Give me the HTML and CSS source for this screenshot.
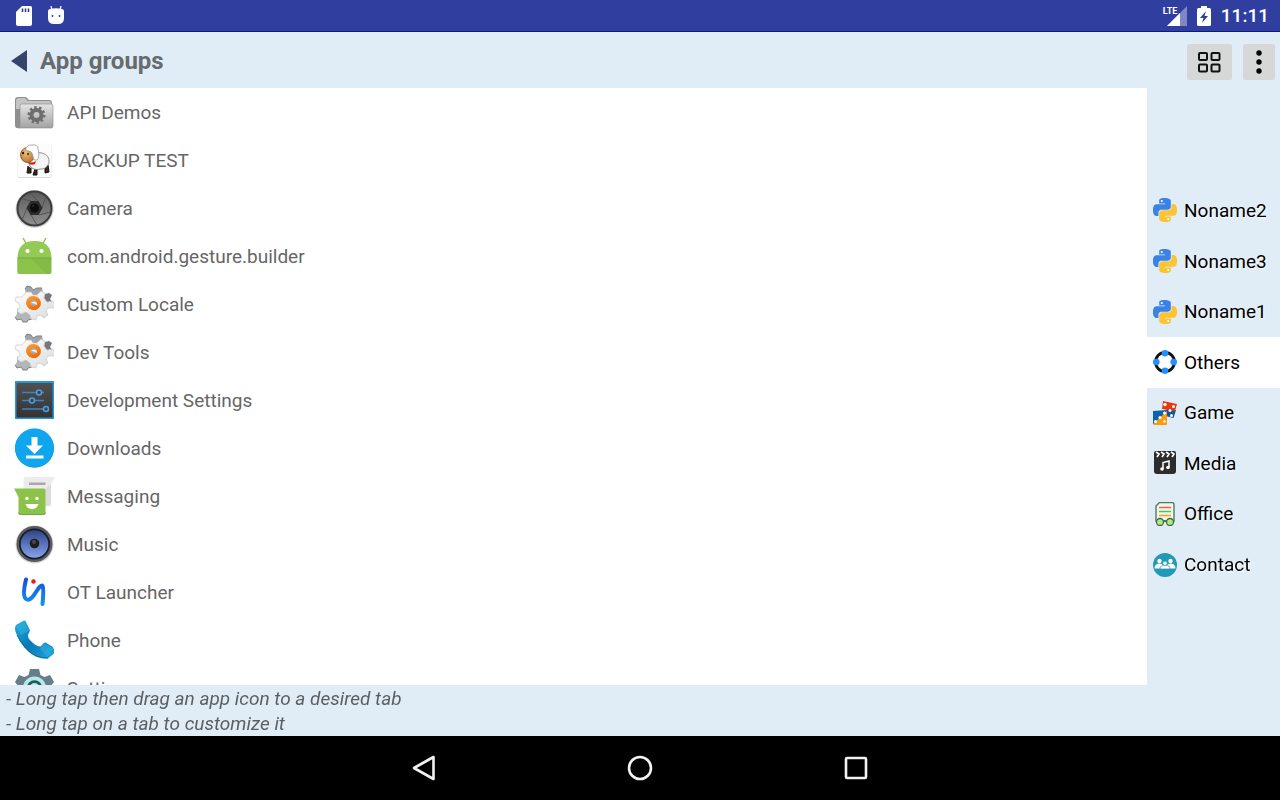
FILE: index.html
```html
<!DOCTYPE html>
<html lang="en">

<head>
    <meta charset="UTF-8">
    <meta name="viewport" content="width=device-width, initial-scale=1.0">
    <title>App groups</title>
    <link rel="stylesheet" href="styles.css">
</head>

<body>
    <!-- Shared shapes -->
    <svg class="defs" aria-hidden="true">
        <defs>
            <linearGradient id="silver" x1="0" y1="0" x2="0" y2="1">
                <stop offset="0" stop-color="#e4e4e4" />
                <stop offset="1" stop-color="#a2a2a2" />
            </linearGradient>
            <linearGradient id="gear-white" x1="0" y1="0" x2="1" y2="1">
                <stop offset="0" stop-color="#ffffff" />
                <stop offset="1" stop-color="#d8dadc" />
            </linearGradient>
            <linearGradient id="orange" x1="0" y1="0" x2="1" y2="1">
                <stop offset="0" stop-color="#ff9a2c" />
                <stop offset="1" stop-color="#f06400" />
            </linearGradient>
            <radialGradient id="tan" cx=".4" cy=".35" r=".7">
                <stop offset="0" stop-color="#f0bc78" />
                <stop offset="1" stop-color="#b8732c" />
            </radialGradient>
            <linearGradient id="lens" x1="0" y1="0" x2="0" y2="1">
                <stop offset="0" stop-color="#5c5c5c" />
                <stop offset="1" stop-color="#8e8e8e" />
            </linearGradient>
            <linearGradient id="speaker" x1="0" y1="0" x2="0" y2="1">
                <stop offset="0" stop-color="#2f4486" />
                <stop offset="1" stop-color="#86a3ec" />
            </linearGradient>
            <linearGradient id="handset" x1="0" y1="0" x2="1" y2="1">
                <stop offset="0" stop-color="#22aee0" />
                <stop offset=".5" stop-color="#0878b4" />
                <stop offset="1" stop-color="#22a8dc" />
            </linearGradient>
            <linearGradient id="ink" x1="0" y1="0" x2="0" y2="1">
                <stop offset="0" stop-color="#1a50e0" />
                <stop offset="1" stop-color="#1292f0" />
            </linearGradient>
            <linearGradient id="panel" x1="0" y1="0" x2="0" y2="1">
                <stop offset="0" stop-color="#505050" />
                <stop offset="1" stop-color="#333333" />
            </linearGradient>
        </defs>

        <symbol id="icon-gears" viewBox="0 0 40 40">
            <path d="M11 5l2-3 4 1 2 3 4-2 5 0 1 4 2 2-3 6H13l-1-6z" fill="#a2a4a7" />
            <path d="M11 5l2-3 4 1 2 3 4-2 5 0" fill="none" stroke="#7d8083" />
            <path d="M30 14l1-4 4-1 3 2-2 4 3 4-4 3-5-4z" fill="#73767a" />
            <path d="M3 25l4-1 8 1 5 5-2 2 0 3-4 1-1 2-4 0-2-3-4 1-2-3 2-3z" fill="#b4b7ba" />
            <path d="M1 33l2 3 4-1 2 3h4l1-2 4-1" fill="none" stroke="#7d8083" />
            <path d="M12 8l5 0 2 3 4 0 4-4 4 2-1 5 3 4 6-1 3 4-2 3-6 0-2 3 2 4-4 3-4-3-3 1-1 4-5-1-1-4-4-3-5 2-4-3 3-4-1-4-4-2 1-4 6 0 2-2z" fill="url(#gear-white)" stroke="#c6c8cb" stroke-width=".7" />
            <ellipse cx="19.500" cy="19" rx="5.500" ry="5" fill="#a5a8ab" stroke="url(#orange)" stroke-width="4" transform="rotate(15 19.500 19)" />
            <path d="M17 19q3-3 6 0v2q-3-2-6-2z" fill="#f4f4f4" />
        </symbol>

        <symbol id="icon-python" viewBox="0 0 24 24">
            <path fill="#3b82e8" d="M14.25.18l.9.2.73.26.59.3.45.32.34.34.25.34.16.33.1.3.04.26.02.2-.01.13V8.5l-.05.63-.13.55-.21.46-.26.38-.3.31-.33.25-.35.19-.35.14-.33.1-.3.07-.26.04-.21.02H8.77l-.69.05-.59.14-.5.22-.41.27-.33.32-.27.35-.2.36-.15.37-.1.35-.07.32-.04.27-.02.21v3.06H3.17l-.21-.03-.28-.07-.32-.12-.35-.18-.36-.26-.36-.36-.35-.46-.32-.59-.28-.73-.21-.88-.14-1.05-.05-1.23.06-1.22.16-1.04.24-.87.32-.71.36-.57.4-.44.42-.33.42-.24.4-.16.36-.1.32-.05.24-.01h.16l.06.01h8.16v-.83H6.18l-.01-2.75-.02-.37.05-.34.11-.31.17-.28.25-.26.31-.23.38-.2.44-.18.51-.15.58-.12.64-.1.71-.06.77-.04.84-.02 1.27.05z" />
            <path fill="#fbc433" transform="rotate(180 12 12)" d="M14.25.18l.9.2.73.26.59.3.45.32.34.34.25.34.16.33.1.3.04.26.02.2-.01.13V8.5l-.05.63-.13.55-.21.46-.26.38-.3.31-.33.25-.35.19-.35.14-.33.1-.3.07-.26.04-.21.02H8.77l-.69.05-.59.14-.5.22-.41.27-.33.32-.27.35-.2.36-.15.37-.1.35-.07.32-.04.27-.02.21v3.06H3.17l-.21-.03-.28-.07-.32-.12-.35-.18-.36-.26-.36-.36-.35-.46-.32-.59-.28-.73-.21-.88-.14-1.05-.05-1.23.06-1.22.16-1.04.24-.87.32-.71.36-.57.4-.44.42-.33.42-.24.4-.16.36-.1.32-.05.24-.01h.16l.06.01h8.16v-.83H6.18l-.01-2.75-.02-.37.05-.34.11-.31.17-.28.25-.26.31-.23.38-.2.44-.18.51-.15.58-.12.64-.1.71-.06.77-.04.84-.02 1.27.05z" />
            <circle cx="8.8" cy="3" r="1.1" fill="#fff" />
            <circle cx="15.2" cy="21" r="1.1" fill="#fff" />
        </symbol>
    </svg>

    <div class="status-bar">
        <div class="status-left">
            <svg width="16" height="20" viewBox="0 0 16 20">
                <path d="M6 0h8.500q1.500 0 1.500 1.500V18q0 2-2 2H2q-2 0-2-2V6z" fill="#fff" />
                <path d="M6.500 2.500v3.500M9.500 2.500v3.500M12.500 2.500v3.500" stroke="#303f9f" stroke-width="1.600" />
            </svg>
            <svg width="16" height="20" viewBox="0 0 16 20">
                <path d="M4 4L3 0M12 4l1-4" stroke="#fff" stroke-width="1.200" />
                <path d="M0 5q0-1.500 2-2 6-1.500 12 0 2 .5 2 2v7q0 6-6 6H6q-6 0-6-6z" fill="#fff" />
                <circle cx="4.500" cy="10" r="1" fill="#303f9f" />
                <circle cx="11.500" cy="10" r="1" fill="#303f9f" />
            </svg>
        </div>
        <div class="status-right">
            <div class="signal">
                <svg width="20" height="20" viewBox="0 0 20 20">
                    <path d="M20 0v20H0z" fill="#7f88c4" />
                    <path d="M13 7v13H0z" fill="#fff" />
                </svg>
                <span class="lte">LTE</span>
            </div>
            <svg width="14" height="20" viewBox="0 0 14 20">
                <path d="M4 0h6v2h2.500q1.500 0 1.500 1.500v15q0 1.500-1.500 1.500h-11Q0 20 0 18.500v-15Q0 2 1.500 2H4z" fill="#fff" />
                <path d="M9 5L3 12h3.500L5 17l6-7H7.500z" fill="#303f9f" />
            </svg>
            <span class="clock">11:11</span>
        </div>
    </div>

    <header class="header">
        <button class="back" aria-label="Back">
            <svg width="16" height="22" viewBox="0 0 16 22">
                <path d="M16 0v22L0 11z" fill="#36446c" />
            </svg>
        </button>
        <h1>App groups</h1>
        <div class="actions">
            <button class="action action-grid" aria-label="Grid view">
                <svg width="25" height="22" viewBox="0 0 25 22" fill="none" stroke="#111" stroke-width="2">
                    <rect x="2" y="2" width="8" height="7" rx="1" />
                    <rect x="14.500" y="2" width="8" height="7" rx="1" />
                    <rect x="2" y="13.500" width="8" height="7" rx="1" />
                    <rect x="14.500" y="13.500" width="8" height="7" rx="1" />
                </svg>
            </button>
            <button class="action action-more" aria-label="More options">
                <svg width="6" height="24" viewBox="0 0 6 24">
                    <circle cx="3" cy="3" r="2.700" />
                    <circle cx="3" cy="12" r="2.700" />
                    <circle cx="3" cy="21" r="2.700" />
                </svg>
            </button>
        </div>
    </header>

    <main class="content">
        <ul class="apps">
            <li>
                <button class="app">
                    <svg class="app-icon" viewBox="0 0 40 40">
                        <path d="M1 8q0-3 3-3h7q2 0 3 2l1 1h20q3 0 3 3v25H3q-2 0-2-3z" fill="#8f8f8f" />
                        <path d="M2 9q0-3 3-3h6l3 3h21q2 0 2 2v6H2z" fill="#c4c4c4" />
                        <path d="M6 14q0-2 2-2h29q2 0 2 2v20q0 2-2 2H4q2 0 2-3z" fill="url(#silver)" stroke="#8a8a8a" stroke-width=".6" />
                        <circle cx="22.500" cy="23" r="5" fill="none" stroke="#6e6e6e" stroke-width="4" />
                        <circle cx="22.500" cy="23" r="7.500" fill="none" stroke="#6e6e6e" stroke-width="3" stroke-dasharray="2.400 2.300" />
                    </svg>
                    <span>API Demos</span>
                </button>
            </li>
            <li>
                <button class="app">
                    <svg class="app-icon" viewBox="0 0 40 40">
                        <rect x="3.500" y="4" width="34" height="34" rx="2" fill="#d8d8d8" />
                        <rect x="3.500" y="3.500" width="34" height="33.500" rx="2" fill="#fcfcfc" />
                        <path d="M14 26l-1 7 4 0 0-5M21 29l-2 6 4 0 0-6M31 27l0 6 4-1-1-7" fill="#402416" stroke="#111" />
                        <path d="M16 17q5-6 12-4 8 2 7 10-3 7-9 6-6 2-10-3-3-4 0-9z" fill="#f5f5f5" stroke="#777" stroke-width=".8" />
                        <path d="M13 21q4 3 9 0l-1 3q-4 2-7-1z" fill="#e11818" />
                        <ellipse cx="13.500" cy="15" rx="7" ry="7.500" fill="url(#tan)" stroke="#7d4c1c" stroke-width=".8" />
                        <path d="M12 8q2-4 6-3 6-1 6 4 2 8-1 11-4 1-4-4-1-5-4-5-4 0-3-3z" fill="#fff" stroke="#999" stroke-width=".8" />
                        <circle cx="9" cy="13" r="1.200" fill="#222" />
                        <circle cx="14" cy="14" r="1" fill="#222" />
                    </svg>
                    <span>BACKUP TEST</span>
                </button>
            </li>
            <li>
                <button class="app">
                    <svg class="app-icon" viewBox="0 0 40 40">
                        <circle cx="20.500" cy="21" r="19" fill="#d4d4d4" />
                        <circle cx="20.500" cy="20.500" r="17" fill="url(#lens)" stroke="#3c3c3c" stroke-width="2" />
                        <path d="M17 13l-9-2M24 13l-8-8M28 20l4-12M25 27l11-3M17 27l6 10M13 20L8 32" stroke="#4c4c4c" fill="none" stroke-width=".8" />
                        <path d="M16.500 13h8l4 7-4 7h-8l-4-7z" fill="#2b2b2b" />
                        <circle cx="20.500" cy="20" r="4.500" fill="#0d0d0d" />
                        <circle cx="19" cy="18" r=".7" fill="#555" />
                    </svg>
                    <span>Camera</span>
                </button>
            </li>
            <li>
                <button class="app">
                    <svg class="app-icon" viewBox="0 0 40 40">
                        <path d="M9 2l4 7M32 2l-4 7" stroke="#8bc34a" stroke-width="1.500" />
                        <path d="M3.500 22Q4 5 20.500 5T37.500 22z" fill="#93c954" />
                        <path d="M3.500 22h34v14q0 2-2 2h-30q-2 0-2-2z" fill="#84bb47" />
                        <path d="M3.500 22h13l16 16H5.500q-2 0-2-2z" fill="#8cc34b" />
                        <path d="M3.500 22h34" stroke="#6fa338" stroke-width=".8" />
                        <circle cx="13.500" cy="15" r="2.100" fill="#fff" />
                        <circle cx="27.500" cy="15" r="2.100" fill="#fff" />
                    </svg>
                    <span>com.android.gesture.builder</span>
                </button>
            </li>
            <li>
                <button class="app">
                    <svg class="app-icon"><use href="#icon-gears" /></svg>
                    <span>Custom Locale</span>
                </button>
            </li>
            <li>
                <button class="app">
                    <svg class="app-icon"><use href="#icon-gears" /></svg>
                    <span>Dev Tools</span>
                </button>
            </li>
            <li>
                <button class="app">
                    <svg class="app-icon" viewBox="0 0 40 40">
                        <rect x="1" y="1" width="39" height="38" fill="#2497d8" />
                        <rect x="2.500" y="3" width="36" height="34.500" fill="url(#panel)" />
                        <path d="M8 12.500h22M8 20.500h22M8 29h27" stroke="#3e83c0" stroke-width="1.600" />
                        <g fill="#38444e" stroke="#4a9be0" stroke-width="1.600">
                            <circle cx="25" cy="12.500" r="2.500" />
                            <circle cx="18" cy="20.500" r="2.500" />
                            <circle cx="32" cy="29" r="2.500" />
                        </g>
                    </svg>
                    <span>Development Settings</span>
                </button>
            </li>
            <li>
                <button class="app">
                    <svg class="app-icon" viewBox="0 0 40 40">
                        <circle cx="20.500" cy="20.300" r="19.500" fill="#0d8fce" />
                        <circle cx="20.500" cy="19.800" r="19.300" fill="#0fa5ef" />
                        <path d="M17.500 9h6v8.500H29L20.500 26 12 17.500h5.500zM12 27.500h17.500v3H12z" fill="#fff" />
                    </svg>
                    <span>Downloads</span>
                </button>
            </li>
            <li>
                <button class="app">
                    <svg class="app-icon" viewBox="0 0 40 40">
                        <path d="M9.500 3q0-2 2-2H41l-4 7v20q0 2-2 2H9.500z" fill="#ececec" />
                        <path d="M31 13l6-5v20q0 2-2 2h-4z" fill="#dcdcdc" />
                        <path d="M15 6.500h16.500v2.500H15z" fill="#a9a9a9" />
                        <path d="M0 12.500h29.500q2 0 2 2V37q0 2-2 2h-23q-2 0-2-2V21z" fill="#8bc34a" />
                        <path d="M4.500 36.500q0 2 2 2h23q2 0 2-2" fill="none" stroke="#6e9d38" stroke-width=".8" />
                        <circle cx="13" cy="22.500" r="1.700" fill="#fff" />
                        <circle cx="23" cy="22.500" r="1.700" fill="#fff" />
                        <path d="M11.500 28h13q-1.500 5-6.500 5t-6.500-5z" fill="#fff" />
                    </svg>
                    <span>Messaging</span>
                </button>
            </li>
            <li>
                <button class="app">
                    <svg class="app-icon" viewBox="0 0 40 40">
                        <circle cx="20.500" cy="20.500" r="19" fill="#d4d4d4" />
                        <circle cx="20.500" cy="20" r="18" fill="#5a5a5a" />
                        <circle cx="20.500" cy="20" r="15.500" fill="#161b2c" />
                        <circle cx="20.500" cy="20" r="13.800" fill="url(#speaker)" />
                        <circle cx="20.500" cy="19.500" r="4.800" fill="#1e1e1e" />
                        <circle cx="20" cy="18" r="2" fill="#4a4a4a" />
                    </svg>
                    <span>Music</span>
                </button>
            </li>
            <li>
                <button class="app">
                    <svg class="app-icon" viewBox="0 0 40 40">
                        <path d="M12 7.500Q8 24 12 27t10-7q5-8 6.500-6t0 18" fill="none" stroke="url(#ink)" stroke-width="4" stroke-linecap="round" stroke-linejoin="round" />
                        <circle cx="19.500" cy="9.500" r="2.200" fill="#f01818" />
                    </svg>
                    <span>OT Launcher</span>
                </button>
            </li>
            <li>
                <button class="app">
                    <svg class="app-icon" viewBox="0 0 40 40">
                        <path d="M10 .5L2 5q-2 3 0 8 7 17 19 23 7 3 13 2.500l6-5q.5-4-1-6.500l-7.500-4.500q-2 0-2.500 1.500l-2.500 2.500q-4 0-8-4-5-4-4.500-7.500l2-4.500L11.500 1z" fill="url(#handset)" />
                        <path d="M10 1l-8 5 5 9 8.500-4.500zM29.500 23l-3.500 6 8 8.500 5-9z" fill="#3bbce8" opacity=".4" />
                        <path d="M3 15q8 16 19 21 6 2.500 12 2" fill="none" stroke="#07699c" />
                    </svg>
                    <span>Phone</span>
                </button>
            </li>
            <li>
                <button class="app">
                    <svg class="app-icon" viewBox="0 0 40 40">
                        <path d="M16 1h9l1.500 6 4 2 5.500-2 4 7-4 5v3l4 5-4 7-5.500-2-4 2L25 39h-9l-1.500-5-4-2L5 34l-4-7 4-5v-3l-4-5 4-7 5.500 2 4-2z" fill="#647e8a" />
                        <circle cx="20.500" cy="20" r="11.500" fill="#d4dde0" />
                        <circle cx="20.500" cy="20" r="9" fill="#34505c" stroke="#a0f5e6" stroke-width="2.500" />
                        <circle cx="20.500" cy="20" r="5" fill="#a0f5e6" />
                    </svg>
                    <span>Settings</span>
                </button>
            </li>
        </ul>

        <nav class="groups">
            <div class="tabs">
                <button class="tab"><svg class="tab-icon"><use href="#icon-python" /></svg>Noname2</button>
                <button class="tab"><svg class="tab-icon"><use href="#icon-python" /></svg>Noname3</button>
                <button class="tab"><svg class="tab-icon"><use href="#icon-python" /></svg>Noname1</button>
                <button class="tab active" aria-current="true">
                    <svg class="tab-icon" viewBox="0 0 24 24">
                        <circle cx="12" cy="12" r="9.500" fill="none" stroke="#111" stroke-width="2.800" />
                        <g fill="#1e90ff">
                            <circle cx="12" cy="3.300" r="3.300" />
                            <circle cx="20.700" cy="12" r="3.300" />
                            <circle cx="12" cy="20.700" r="3.300" />
                            <circle cx="3.300" cy="12" r="3.300" />
                        </g>
                    </svg>Others
                </button>
                <button class="tab">
                    <svg class="tab-icon" viewBox="0 0 24 24">
                        <path d="M14 7l9 2-2.500 8-8-2z" fill="#0d57a0" />
                        <path d="M10 0l14 3-2 7-13-2z" fill="#e8380d" />
                        <path d="M0 10l14-1v14H0z" fill="#0b62ae" />
                        <path d="M0 23l14-13v13q0 1-1 1H1z" fill="#f99b0c" />
                        <g fill="#fff">
                            <circle cx="12" cy="3.500" r="1.700" />
                            <circle cx="20.500" cy="5.500" r="1.500" />
                            <circle cx="17" cy="9.500" r="1.500" />
                            <circle cx="18.500" cy="14.500" r="1.500" />
                            <circle cx="11.500" cy="12" r="1.500" />
                            <circle cx="7" cy="16.500" r="1.500" />
                            <circle cx="2.500" cy="20.500" r="1.500" />
                            <circle cx="11.500" cy="20.500" r="1.200" />
                        </g>
                    </svg>Game
                </button>
                <button class="tab">
                    <svg class="tab-icon" viewBox="0 0 24 24">
                        <path d="M1 2q0-2 2-2h18q2 0 2 2v18q0 3-3 3H4q-3 0-3-3z" fill="#2c2c2c" />
                        <path d="M3 1l3 2-2 3M8 1l3 2-2 3M13 1l3 2-2 3M18 1l3 2-2 3" fill="none" stroke="#fff" stroke-width="1.700" />
                        <path d="M10 18v-6.500l6-1.500v6.500" fill="none" stroke="#fff" stroke-width="1.500" />
                        <circle cx="9" cy="18" r="1.800" fill="#fff" />
                        <circle cx="15" cy="16.500" r="1.800" fill="#fff" />
                    </svg>Media
                </button>
                <button class="tab">
                    <svg class="tab-icon" viewBox="0 0 24 24">
                        <path d="M3 19V4l3.500-3.500H19q2 0 2 2V19z" fill="#f0f6ee" stroke="#4f7d5c" stroke-width="1.400" />
                        <path d="M6 5.500h12" stroke="#ff5a50" stroke-width="1.500" />
                        <path d="M6 9.500h12" stroke="#3dcc4e" stroke-width="1.500" />
                        <path d="M6 13.500h12" stroke="#ff9d1e" stroke-width="1.500" />
                        <g fill="#b4e68c" stroke="#3c6e3c" stroke-width="1.300">
                            <circle cx="7" cy="20" r="3.500" />
                            <circle cx="17" cy="20" r="3.500" />
                            <path d="M10.500 19.500q1.500-1 3 0" fill="none" />
                        </g>
                    </svg>Office
                </button>
                <button class="tab">
                    <svg class="tab-icon" viewBox="0 0 24 24">
                        <circle cx="12" cy="12" r="12" fill="#209ab5" />
                        <g fill="#fff">
                            <circle cx="6.500" cy="8" r="2.200" />
                            <circle cx="17.500" cy="8" r="2.200" />
                            <path d="M1.500 15.500q0-4.500 4.500-5 3.500 0 4 2l-2.500 3zM22.500 15.500q0-4.500-4.500-5-3.500 0-4 2l2.500 3z" />
                        </g>
                        <g fill="#fff" stroke="#209ab5" stroke-width=".7">
                            <path d="M7 16q0-4 5-4t5 4z" />
                            <circle cx="12" cy="10.300" r="2.200" />
                        </g>
                    </svg>Contact
                </button>
            </div>
        </nav>
    </main>

    <footer class="hints">
        <p>- Long tap then drag an app icon to a desired tab</p>
        <p>- Long tap on a tab to customize it</p>
    </footer>

    <nav class="nav-bar">
        <button aria-label="Back">
            <svg width="24" height="26" viewBox="0 0 24 26">
                <path d="M21.500 2v22L2 13z" fill="none" stroke="#f2f2f2" stroke-width="2.600" stroke-linejoin="round" />
            </svg>
        </button>
        <button aria-label="Home">
            <svg width="26" height="26" viewBox="0 0 26 26">
                <circle cx="13" cy="13" r="11" fill="none" stroke="#f2f2f2" stroke-width="2.600" />
            </svg>
        </button>
        <button aria-label="Recent apps">
            <svg width="24" height="24" viewBox="0 0 24 24">
                <rect x="2" y="2" width="20" height="20" rx="1" fill="none" stroke="#f2f2f2" stroke-width="2.600" />
            </svg>
        </button>
    </nav>
</body>

</html>
```
FILE: styles.css
```css
html {
    box-sizing: border-box;
    font-family: Roboto, sans-serif;
    font-size: 19px;
}

*,
*:before,
*:after {
    box-sizing: inherit;
}

body {
    margin: 0;
    height: 100vh;
    display: flex;
    flex-direction: column;
    background-color: #e0ecf6;
}

button {
    margin: 0;
    padding: 0;
    border: 0;
    background: none;
    font: inherit;
    color: inherit;
    text-align: left;
    cursor: pointer;
}

svg {
    display: block;
    flex-shrink: 0;
}

.defs {
    position: absolute;
    width: 0;
    height: 0;
}

/* Status bar */
.status-bar {
    display: flex;
    justify-content: space-between;
    align-items: center;
    height: 32px;
    padding: 0 11px 0 16px;
    background-color: #303f9f;
    border-bottom: 1px solid #0b1a80;
    color: #fff;
}

.status-left,
.status-right {
    display: flex;
    align-items: center;
}

.status-left {
    gap: 16px;
}

.status-right {
    gap: 10px;
}

.signal {
    position: relative;
    padding-left: 4px;
}

.lte {
    position: absolute;
    top: 0;
    left: 0;
    font-size: 9px;
    font-weight: bold;
    line-height: 10px;
}

.clock {
    font-size: 19px;
    font-weight: 500;
}

/* Title bar */
.header {
    display: flex;
    align-items: center;
    height: 56px;
    padding: 2px 5px 0 11px;
}

.header h1 {
    flex-grow: 1;
    margin: 0 0 0 13px;
    font-size: 24px;
    font-weight: bold;
    line-height: 28px;
    color: #666b70;
}

.actions {
    display: flex;
    gap: 11px;
    padding-top: 2px;
}

.action {
    display: flex;
    justify-content: center;
    align-items: center;
    height: 36px;
    border-radius: 2px;
    background-color: #d6d7d7;
}

.action-grid {
    width: 45px;
}

.action-more {
    width: 32px;
}

/* App list and group tabs */
.content {
    flex: 1;
    min-height: 0;
    display: flex;
}

.apps {
    flex: 1;
    margin: 0;
    padding: 0;
    list-style: none;
    overflow-y: auto;
    scrollbar-width: none;
    background-color: #fff;
    color: #666;
}

.app {
    display: flex;
    align-items: center;
    gap: 13px;
    width: 100%;
    height: 48px;
    padding: 0 14px;
}

.app-icon {
    width: 40px;
    height: 40px;
    overflow: visible;
}

.groups {
    display: flex;
    flex-direction: column;
    justify-content: center;
    width: 133px;
    padding-top: 2px;
}

.tabs {
    display: grid;
    grid-auto-rows: 1fr;
    height: 68%;
}

.tab {
    display: flex;
    align-items: center;
    gap: 7px;
    padding: 0 6px;
    color: #000;
    text-shadow: 1px 1px 2px #fff;
}

.tab.active {
    background-color: #fff;
}

.tab-icon {
    width: 24px;
    height: 24px;
}

.hints {
    padding: 1px 6px 0;
    font-style: italic;
    line-height: 25px;
    color: #5a5f64;
}

.hints p {
    margin: 0;
}

/* System buttons */
.nav-bar {
    display: flex;
    justify-content: center;
    height: 64px;
    background-color: #000;
}

.nav-bar button {
    display: flex;
    justify-content: center;
    align-items: center;
    width: 216px;
}
```
